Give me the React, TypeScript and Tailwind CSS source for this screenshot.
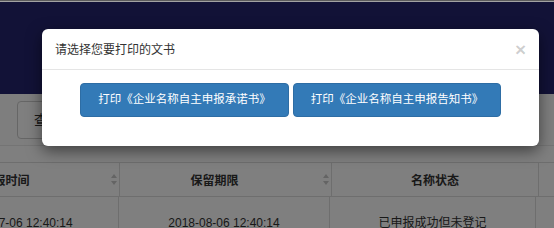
import React from "react";

const font = { fontFamily: '"Liberation Sans", "Noto Sans CJK SC", sans-serif' };

function SortIcon() {
  return (
    <svg width="6" height="11" viewBox="0 0 6 11" className="shrink-0">
      <path d="M3 0 L6 4 L0 4 Z" fill="#c8c8c8" />
      <path d="M3 11 L6 7 L0 7 Z" fill="#c8c8c8" />
    </svg>
  );
}

export default function App() {
  return (
    <div className="relative w-[554px] h-[228px] overflow-hidden bg-white" style={font}>
      {/* page */}
      <div className="relative z-20 h-[1px] bg-[#5c5c5c]" />
      <div className="relative z-20 h-[1px] bg-[#a2a2a2]" />
      <div className="h-[92px] bg-[#25246f]" />
      <div className="h-[52px] bg-[#fcfcfc] border-b border-[#e8e8e8] pt-[7px] pl-[17px]">
        <button className="h-[38px] px-[16px] rounded-[4px] border border-[#cccccc] bg-white text-[14px] text-[#333]">
          查询条件
        </button>
      </div>
      <div className="mt-[16px] ml-[-94px] w-[760px]">
        {/* header row */}
        <div className="flex h-[35px] border-t border-b border-[#dddddd] text-[12px] font-bold text-[#333]">
          <div className="w-[214px] shrink-0 flex items-center border-r border-[#dddddd] pl-[8px] pr-[2px]">
            <span className="flex-1 text-center pr-[14px] pt-[3px]">申报时间</span>
            <SortIcon />
          </div>
          <div className="w-[212px] shrink-0 flex items-center border-r border-[#dddddd] pl-[8px] pr-[2px]">
            <span className="flex-1 text-center pr-[22px] pt-[3px]">保留期限</span>
            <SortIcon />
          </div>
          <div className="w-[207px] shrink-0 flex items-center justify-center border-r border-[#dddddd] pt-[3px]">
            名称状态
          </div>
          <div className="flex-1" />
        </div>
        {/* body row */}
        <div className="flex h-[44px] text-[12px] text-[#333]">
          <div className="w-[213px] shrink-0 flex items-center justify-center border-r border-[#dddddd] pt-[7px] pl-[10px]">
            2018-07-06 12:40:14
          </div>
          <div className="w-[211px] shrink-0 flex items-center justify-center border-r border-[#dddddd] pt-[7px]">
            2018-08-06 12:40:14
          </div>
          <div className="w-[206px] shrink-0 flex items-center justify-center border-r border-[#dddddd] pt-[7px]">
            已申报成功但未登记
          </div>
          <div className="flex-1" />
        </div>
      </div>

      {/* backdrop */}
      <div className="absolute inset-0 z-10 bg-black/50" />

      {/* modal */}
      <div className="absolute z-30 left-[42px] top-[29px] w-[497px] bg-white rounded-[6px] shadow-[0_5px_15px_rgba(0,0,0,0.5)]">
        <div className="h-[41px] flex items-center justify-between pl-[13px] pr-[13px] border-b border-[#e5e5e5]">
          <span className="text-[12px] text-[#333] pt-[1px]">请选择您要打印的文书</span>
          <span className="text-[19px] leading-none font-bold text-black/20 pt-[1px]">×</span>
        </div>
        <div className="flex justify-center gap-[4px] pt-[13px] pb-[29px]">
          <button className="w-[209px] h-[34px] rounded-[4px] bg-[#337ab7] border border-[#2e6da4] text-white text-[11.5px]">
            打印《企业名称自主申报承诺书》
          </button>
          <button className="w-[208px] h-[34px] rounded-[4px] bg-[#337ab7] border border-[#2e6da4] text-white text-[11.5px]">
            打印《企业名称自主申报告知书》
          </button>
        </div>
      </div>
    </div>
  );
}
